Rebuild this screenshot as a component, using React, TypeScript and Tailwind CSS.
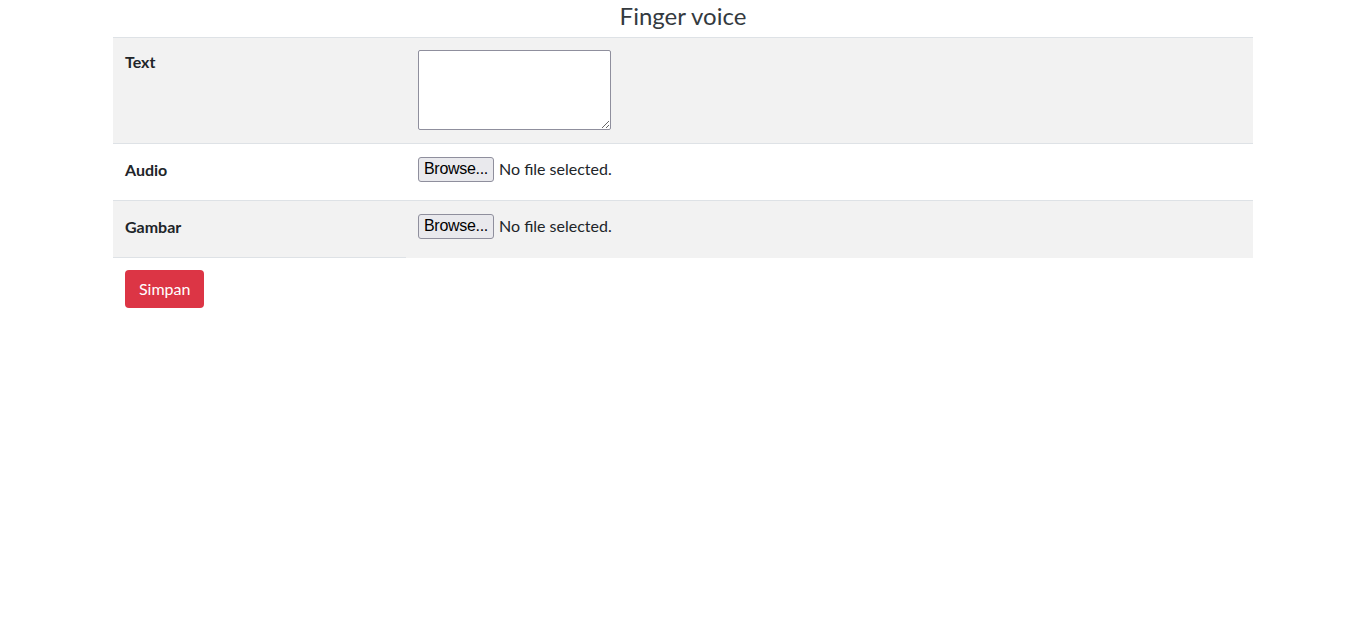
import React from "react";

const rows = [
  { label: "Text", kind: "textarea" },
  { label: "Audio", kind: "file" },
  { label: "Gambar", kind: "file" },
];

function FileField() {
  return (
    <div className="flex items-start h-[32px] pt-[1px]">
      <span className="inline-flex items-center h-[25px] px-[5px] pb-[1px] border border-[#8f8f9d] rounded-[3px] bg-[#e9e9ed] text-black text-[16px] leading-none font-['Liberation_Sans',sans-serif] tracking-[-0.3px]">
        Browse...
      </span>
      <span className="ml-[5px] leading-[24px] text-[#212529]">No file selected.</span>
    </div>
  );
}

export default function App() {
  return (
    <div className="min-h-screen bg-white font-['Lato','Open_Sans',sans-serif] text-[16px] text-[#212529]">
      <div className="w-[1140px] mx-auto">
        <h3 className="h-[37px] flex items-start justify-center pt-[1px] text-[24px] leading-[30px] text-[#343a40] font-normal">
          Finger voice
        </h3>
        <table className="w-full border-collapse">
          <tbody>
            {rows.map((row, i) => (
              <tr
                key={row.label}
                className={`border-t border-[#dee2e6] ${i % 2 === 0 ? "bg-[#f2f2f2]" : "bg-white"}`}
              >
                <th
                  className={`w-[293px] p-3 text-left align-top font-bold leading-6 ${
                    i === rows.length - 1 ? "border-b border-[#dee2e6]" : ""
                  }`}
                >
                  <div className={row.kind === "file" ? "h-[32px] pt-[2px]" : ""}>{row.label}</div>
                </th>
                <td className="p-3 align-top">
                  {row.kind === "textarea" ? (
                    <div className="h-[81px]">
                      <textarea className="block w-[193px] h-[80px] bg-white border border-[#8f8f9d] rounded-[2px]" />
                    </div>
                  ) : (
                    <FileField />
                  )}
                </td>
              </tr>
            ))}
          </tbody>
        </table>
        <div className="px-3 pt-[12px]">
          <button className="h-[38px] px-[14px] rounded-[4px] bg-[#dc3545] text-white text-[16px]">
            Simpan
          </button>
        </div>
      </div>
    </div>
  );
}
